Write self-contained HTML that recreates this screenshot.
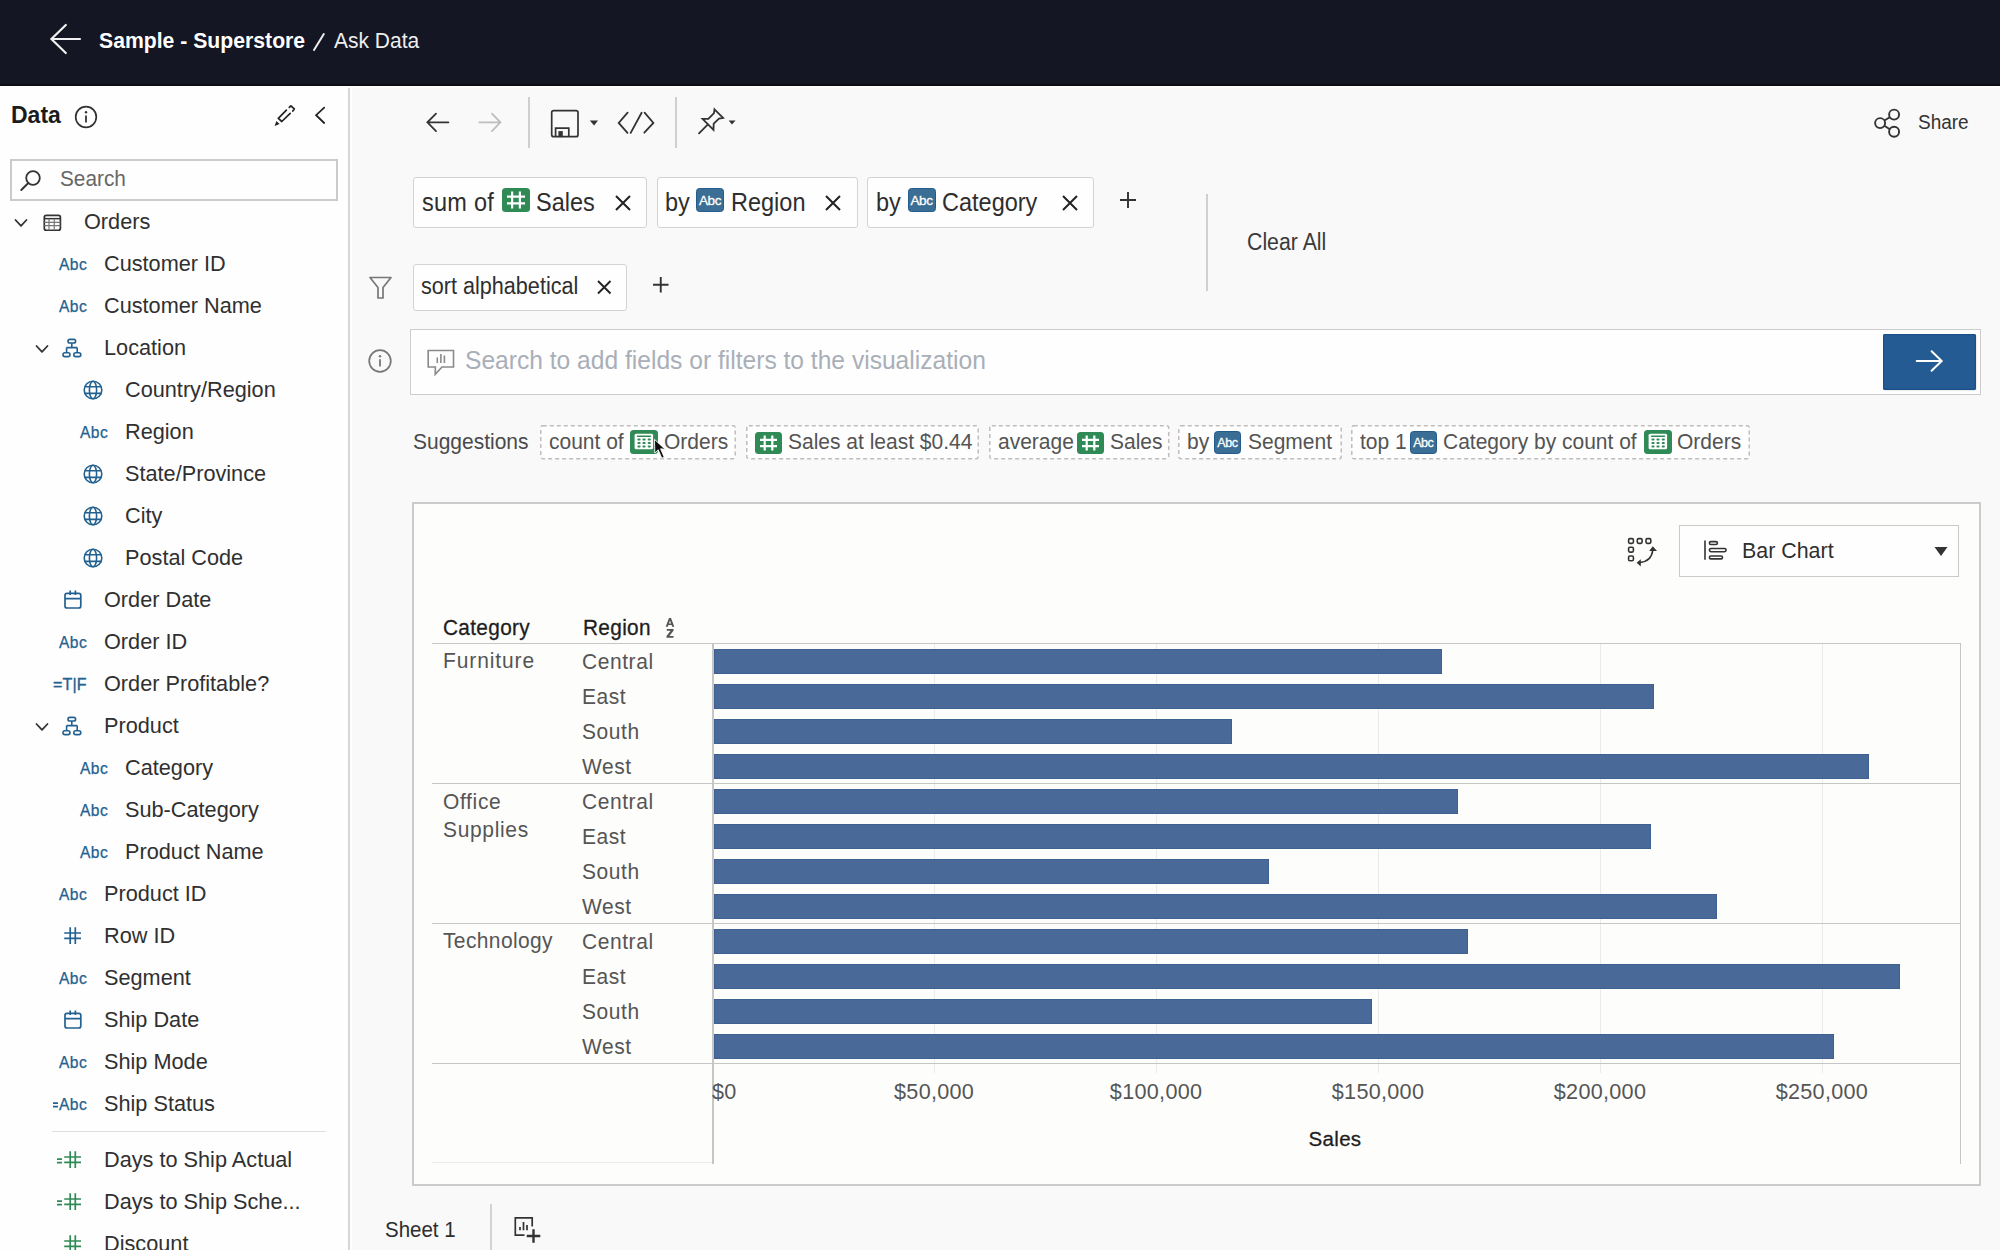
<!DOCTYPE html>
<html><head><meta charset="utf-8"><style>
html,body{margin:0;padding:0;width:2000px;height:1250px;overflow:hidden;background:#f9f9fa;font-family:"Liberation Sans", sans-serif;}
.t{position:absolute;white-space:nowrap;line-height:1;}
svg{overflow:visible}
</style></head><body>
<div style="position:absolute;left:0px;top:0px;width:2000px;height:86px;background:#141624"></div>
<div style="position:absolute;left:0px;top:84px;width:2000px;height:1.6px;background:#0b0d16"></div>
<div style="position:absolute;left:0px;top:86px;width:349px;height:1164px;background:#fefefe"></div>
<div style="position:absolute;left:351px;top:86px;width:1649px;height:1164px;background:#f9f9fa"></div>
<div style="position:absolute;left:348.2px;top:88px;width:1.8px;height:1162px;background:#d6d6d6"></div>
<div style="position:absolute;left:350px;top:86px;width:1.8px;height:1164px;background:#fefefe"></div>
<div style="position:absolute;left:349px;top:86px;width:1651px;height:2px;background:#fefefe"></div>
<svg style="position:absolute;left:49px;top:23px;" width="34" height="33" viewBox="0 0 34 33"><path d="M2.4 16 H31 M16.8 2 L2.4 16 L16.8 30" fill="none" stroke="#f0f0f0" stroke-width="2.2" stroke-linecap="round" stroke-linejoin="miter"/></svg>
<div class="t" style="left:99.0px;top:28.6px;font-size:22.90px;color:#fff;font-weight:bold;transform:scaleX(0.9259);transform-origin:0 0;">Sample - Superstore</div>
<svg style="position:absolute;left:310px;top:31px;" width="18" height="22" viewBox="0 0 18 22"><path d="M4 19 L13.8 3" stroke="#eee" stroke-width="2" stroke-linecap="round"/></svg>
<div class="t" style="left:334.0px;top:28.8px;font-size:22.68px;color:#eee;font-weight:normal;transform:scaleX(0.9259);transform-origin:0 0;">Ask Data</div>
<div class="t" style="left:11.0px;top:103.0px;font-size:24.84px;color:#1b1b1b;font-weight:bold;transform:scaleX(0.9259);transform-origin:0 0;">Data</div>
<svg style="position:absolute;left:74px;top:105px;" width="24" height="24" viewBox="0 0 24 24"><circle cx="12" cy="12" r="10.3" fill="none" stroke="#333" stroke-width="1.7"/><circle cx="12" cy="7.3" r="1.2" fill="#333"/><path d="M12 10.5 V17.5" stroke="#333" stroke-width="1.8"/></svg>
<svg style="position:absolute;left:272px;top:103px;" width="26" height="26" viewBox="0 0 26 26"><g fill="none" stroke="#222" stroke-width="1.7" stroke-linecap="round" stroke-linejoin="round"><path d="M14.4 7.1 L6.3 15.3 L9.8 18.5 L18.2 10.4"/><path d="M17.3 4.4 L18.9 2.8 L22.3 5.9 L20.8 8"/></g><path d="M2.6 22.9 L4.4 17.9 L7.6 21 Z" fill="#222"/></svg>
<svg style="position:absolute;left:313px;top:105px;" width="16" height="20" viewBox="0 0 16 20"><path d="M11.2 2.6 L3.1 10.2 L11.2 18" fill="none" stroke="#222" stroke-width="1.8" stroke-linecap="round" stroke-linejoin="miter"/></svg>
<div style="position:absolute;left:10px;top:159px;width:328px;height:42px;box-sizing:border-box;border:2px solid #cbcbcb;background:#fefefe"></div>
<svg style="position:absolute;left:18px;top:168px;" width="26" height="26" viewBox="0 0 26 26"><circle cx="15" cy="10" r="6.8" fill="none" stroke="#333" stroke-width="1.8"/><path d="M10.3 15 L3.3 22" stroke="#333" stroke-width="1.9" stroke-linecap="round"/></svg>
<div class="t" style="left:59.5px;top:167.6px;font-size:22.46px;color:#666;font-weight:normal;transform:scaleX(0.9259);transform-origin:0 0;">Search</div>
<svg style="position:absolute;left:14.25px;top:218.3px;" width="14" height="10" viewBox="0 0 14 10"><path d="M1.5 2 L7 7.8 L12.5 2" fill="none" stroke="#333" stroke-width="1.8" stroke-linecap="round" stroke-linejoin="round"/></svg>
<svg style="position:absolute;left:42px;top:213px;" width="21" height="19" viewBox="0 0 21 19"><g fill="none"><rect x="2.3" y="2.45" width="16.1" height="14.8" rx="2" stroke="#333" stroke-width="1.7"/><path d="M2.3 5.65 H18.4" stroke="#333" stroke-width="1.5"/><path d="M2.3 9.4 H18.4 M2.3 12.55 H18.4 M7 5.65 V17.2 M12.25 5.65 V17.2" stroke="#777" stroke-width="1.2"/></g></svg>
<div class="t" style="left:84.0px;top:211.0px;font-size:22.46px;color:#303030;font-weight:normal;transform:scaleX(0.9662);transform-origin:0 0;">Orders</div>
<div class="t" style="left:59.0px;top:257.3px;font-size:15.60px;color:#236190;font-weight:normal;letter-spacing:0.45px;-webkit-text-stroke:0.25px #236190">Abc</div>
<div class="t" style="left:104.0px;top:253.0px;font-size:22.46px;color:#303030;font-weight:normal;transform:scaleX(0.9662);transform-origin:0 0;">Customer ID</div>
<div class="t" style="left:59.0px;top:299.3px;font-size:15.60px;color:#236190;font-weight:normal;letter-spacing:0.45px;-webkit-text-stroke:0.25px #236190">Abc</div>
<div class="t" style="left:104.0px;top:295.0px;font-size:22.46px;color:#303030;font-weight:normal;transform:scaleX(0.9662);transform-origin:0 0;">Customer Name</div>
<svg style="position:absolute;left:35.2px;top:344px;" width="14" height="10" viewBox="0 0 14 10"><path d="M1.5 2 L7 7.8 L12.5 2" fill="none" stroke="#333" stroke-width="1.8" stroke-linecap="round" stroke-linejoin="round"/></svg>
<svg style="position:absolute;left:62px;top:338px;" width="20" height="21" viewBox="0 0 20 21"><g fill="none" stroke="#236190" stroke-width="1.6"><rect x="6" y="1.4" width="7.6" height="3.6" rx="1.8"/><path d="M9.8 5 V9.6 M4.6 9.6 H15.2 M4.6 9.6 V14.4 M15.2 9.6 V14.4"/><rect x="1" y="14.8" width="7" height="3.8" rx="1.9"/><rect x="11.8" y="14.8" width="7" height="3.8" rx="1.9"/></g></svg>
<div class="t" style="left:104.0px;top:337.0px;font-size:22.46px;color:#303030;font-weight:normal;transform:scaleX(0.9662);transform-origin:0 0;">Location</div>
<svg style="position:absolute;left:82.9px;top:380.2px;" width="20" height="20" viewBox="0 0 20 20"><g fill="none" stroke="#236190" stroke-width="1.6"><circle cx="10" cy="10" r="8.8"/><ellipse cx="10" cy="10" rx="3.6" ry="8.8"/><path d="M1.6 6.8 H18.4 M1.6 13.4 H18.4"/></g></svg>
<div class="t" style="left:125.0px;top:379.0px;font-size:22.46px;color:#303030;font-weight:normal;transform:scaleX(0.9662);transform-origin:0 0;">Country/Region</div>
<div class="t" style="left:80.0px;top:425.3px;font-size:15.60px;color:#236190;font-weight:normal;letter-spacing:0.45px;-webkit-text-stroke:0.25px #236190">Abc</div>
<div class="t" style="left:125.0px;top:421.0px;font-size:22.46px;color:#303030;font-weight:normal;transform:scaleX(0.9662);transform-origin:0 0;">Region</div>
<svg style="position:absolute;left:82.9px;top:464.2px;" width="20" height="20" viewBox="0 0 20 20"><g fill="none" stroke="#236190" stroke-width="1.6"><circle cx="10" cy="10" r="8.8"/><ellipse cx="10" cy="10" rx="3.6" ry="8.8"/><path d="M1.6 6.8 H18.4 M1.6 13.4 H18.4"/></g></svg>
<div class="t" style="left:125.0px;top:463.0px;font-size:22.46px;color:#303030;font-weight:normal;transform:scaleX(0.9662);transform-origin:0 0;">State/Province</div>
<svg style="position:absolute;left:82.9px;top:506.20000000000005px;" width="20" height="20" viewBox="0 0 20 20"><g fill="none" stroke="#236190" stroke-width="1.6"><circle cx="10" cy="10" r="8.8"/><ellipse cx="10" cy="10" rx="3.6" ry="8.8"/><path d="M1.6 6.8 H18.4 M1.6 13.4 H18.4"/></g></svg>
<div class="t" style="left:125.0px;top:505.0px;font-size:22.46px;color:#303030;font-weight:normal;transform:scaleX(0.9662);transform-origin:0 0;">City</div>
<svg style="position:absolute;left:82.9px;top:548.2px;" width="20" height="20" viewBox="0 0 20 20"><g fill="none" stroke="#236190" stroke-width="1.6"><circle cx="10" cy="10" r="8.8"/><ellipse cx="10" cy="10" rx="3.6" ry="8.8"/><path d="M1.6 6.8 H18.4 M1.6 13.4 H18.4"/></g></svg>
<div class="t" style="left:125.0px;top:547.0px;font-size:22.46px;color:#303030;font-weight:normal;transform:scaleX(0.9662);transform-origin:0 0;">Postal Code</div>
<svg style="position:absolute;left:63px;top:589px;" width="20" height="21" viewBox="0 0 20 21"><g fill="none" stroke="#236190" stroke-width="1.7"><rect x="2" y="4.4" width="15.8" height="14.6" rx="2"/><path d="M2 9.6 H17.8 M7.2 1.4 V6 M12.4 1.4 V6"/></g></svg>
<div class="t" style="left:104.0px;top:589.0px;font-size:22.46px;color:#303030;font-weight:normal;transform:scaleX(0.9662);transform-origin:0 0;">Order Date</div>
<div class="t" style="left:59.0px;top:635.3px;font-size:15.60px;color:#236190;font-weight:normal;letter-spacing:0.45px;-webkit-text-stroke:0.25px #236190">Abc</div>
<div class="t" style="left:104.0px;top:631.0px;font-size:22.46px;color:#303030;font-weight:normal;transform:scaleX(0.9662);transform-origin:0 0;">Order ID</div>
<div class="t" style="left:53.0px;top:677.0px;font-size:16.00px;color:#236190;font-weight:normal;letter-spacing:0.2px;-webkit-text-stroke:0.35px #236190">=T|F</div>
<div class="t" style="left:104.0px;top:673.0px;font-size:22.46px;color:#303030;font-weight:normal;transform:scaleX(0.9662);transform-origin:0 0;">Order Profitable?</div>
<svg style="position:absolute;left:35.2px;top:722px;" width="14" height="10" viewBox="0 0 14 10"><path d="M1.5 2 L7 7.8 L12.5 2" fill="none" stroke="#333" stroke-width="1.8" stroke-linecap="round" stroke-linejoin="round"/></svg>
<svg style="position:absolute;left:62px;top:716px;" width="20" height="21" viewBox="0 0 20 21"><g fill="none" stroke="#236190" stroke-width="1.6"><rect x="6" y="1.4" width="7.6" height="3.6" rx="1.8"/><path d="M9.8 5 V9.6 M4.6 9.6 H15.2 M4.6 9.6 V14.4 M15.2 9.6 V14.4"/><rect x="1" y="14.8" width="7" height="3.8" rx="1.9"/><rect x="11.8" y="14.8" width="7" height="3.8" rx="1.9"/></g></svg>
<div class="t" style="left:104.0px;top:715.0px;font-size:22.46px;color:#303030;font-weight:normal;transform:scaleX(0.9662);transform-origin:0 0;">Product</div>
<div class="t" style="left:80.0px;top:761.3px;font-size:15.60px;color:#236190;font-weight:normal;letter-spacing:0.45px;-webkit-text-stroke:0.25px #236190">Abc</div>
<div class="t" style="left:125.0px;top:757.0px;font-size:22.46px;color:#303030;font-weight:normal;transform:scaleX(0.9662);transform-origin:0 0;">Category</div>
<div class="t" style="left:80.0px;top:803.3px;font-size:15.60px;color:#236190;font-weight:normal;letter-spacing:0.45px;-webkit-text-stroke:0.25px #236190">Abc</div>
<div class="t" style="left:125.0px;top:799.0px;font-size:22.46px;color:#303030;font-weight:normal;transform:scaleX(0.9662);transform-origin:0 0;">Sub-Category</div>
<div class="t" style="left:80.0px;top:845.3px;font-size:15.60px;color:#236190;font-weight:normal;letter-spacing:0.45px;-webkit-text-stroke:0.25px #236190">Abc</div>
<div class="t" style="left:125.0px;top:841.0px;font-size:22.46px;color:#303030;font-weight:normal;transform:scaleX(0.9662);transform-origin:0 0;">Product Name</div>
<div class="t" style="left:59.0px;top:887.3px;font-size:15.60px;color:#236190;font-weight:normal;letter-spacing:0.45px;-webkit-text-stroke:0.25px #236190">Abc</div>
<div class="t" style="left:104.0px;top:883.0px;font-size:22.46px;color:#303030;font-weight:normal;transform:scaleX(0.9662);transform-origin:0 0;">Product ID</div>
<svg style="position:absolute;left:62px;top:926px;" width="22" height="20" viewBox="0 0 22 20"><g fill="none" stroke="#236190" stroke-width="1.7"><path d="M8.2 1.2 V18 M13.3 1.2 V18 M2.2 7 H19 M2.2 12.3 H19"/></g></svg>
<div class="t" style="left:104.0px;top:925.0px;font-size:22.46px;color:#303030;font-weight:normal;transform:scaleX(0.9662);transform-origin:0 0;">Row ID</div>
<div class="t" style="left:59.0px;top:971.3px;font-size:15.60px;color:#236190;font-weight:normal;letter-spacing:0.45px;-webkit-text-stroke:0.25px #236190">Abc</div>
<div class="t" style="left:104.0px;top:967.0px;font-size:22.46px;color:#303030;font-weight:normal;transform:scaleX(0.9662);transform-origin:0 0;">Segment</div>
<svg style="position:absolute;left:63px;top:1009px;" width="20" height="21" viewBox="0 0 20 21"><g fill="none" stroke="#236190" stroke-width="1.7"><rect x="2" y="4.4" width="15.8" height="14.6" rx="2"/><path d="M2 9.6 H17.8 M7.2 1.4 V6 M12.4 1.4 V6"/></g></svg>
<div class="t" style="left:104.0px;top:1009.0px;font-size:22.46px;color:#303030;font-weight:normal;transform:scaleX(0.9662);transform-origin:0 0;">Ship Date</div>
<div class="t" style="left:59.0px;top:1055.3px;font-size:15.60px;color:#236190;font-weight:normal;letter-spacing:0.45px;-webkit-text-stroke:0.25px #236190">Abc</div>
<div class="t" style="left:104.0px;top:1051.0px;font-size:22.46px;color:#303030;font-weight:normal;transform:scaleX(0.9662);transform-origin:0 0;">Ship Mode</div>
<svg style="position:absolute;left:51.5px;top:1100.5px;" width="8" height="8" viewBox="0 0 8 8"><path d="M1 2.1 H6 M1 5.6 H6" stroke="#236190" stroke-width="1.7"/></svg>
<div class="t" style="left:59.0px;top:1097.3px;font-size:15.60px;color:#236190;font-weight:normal;letter-spacing:0.45px;-webkit-text-stroke:0.25px #236190">Abc</div>
<div class="t" style="left:104.0px;top:1093.0px;font-size:22.46px;color:#303030;font-weight:normal;transform:scaleX(0.9662);transform-origin:0 0;">Ship Status</div>
<div style="position:absolute;left:52px;top:1130.6px;width:274px;height:1.4px;background:#e0e0e0"></div>
<svg style="position:absolute;left:56px;top:1156.5px;" width="8" height="8" viewBox="0 0 8 8"><path d="M1 2.1 H6 M1 5.6 H6" stroke="#2f8a56" stroke-width="1.7"/></svg>
<svg style="position:absolute;left:62px;top:1150px;" width="22" height="20" viewBox="0 0 22 20"><g fill="none" stroke="#2f8a56" stroke-width="1.7"><path d="M8.2 1.2 V18 M13.3 1.2 V18 M2.2 7 H19 M2.2 12.3 H19"/></g></svg>
<div class="t" style="left:104.0px;top:1149.0px;font-size:22.46px;color:#303030;font-weight:normal;transform:scaleX(0.9662);transform-origin:0 0;">Days to Ship Actual</div>
<svg style="position:absolute;left:56px;top:1198.5px;" width="8" height="8" viewBox="0 0 8 8"><path d="M1 2.1 H6 M1 5.6 H6" stroke="#2f8a56" stroke-width="1.7"/></svg>
<svg style="position:absolute;left:62px;top:1192px;" width="22" height="20" viewBox="0 0 22 20"><g fill="none" stroke="#2f8a56" stroke-width="1.7"><path d="M8.2 1.2 V18 M13.3 1.2 V18 M2.2 7 H19 M2.2 12.3 H19"/></g></svg>
<div class="t" style="left:104.0px;top:1191.0px;font-size:22.46px;color:#303030;font-weight:normal;transform:scaleX(0.9662);transform-origin:0 0;">Days to Ship Sche...</div>
<svg style="position:absolute;left:62px;top:1234px;" width="22" height="20" viewBox="0 0 22 20"><g fill="none" stroke="#2f8a56" stroke-width="1.7"><path d="M8.2 1.2 V18 M13.3 1.2 V18 M2.2 7 H19 M2.2 12.3 H19"/></g></svg>
<div class="t" style="left:104.0px;top:1233.0px;font-size:22.46px;color:#303030;font-weight:normal;transform:scaleX(0.9662);transform-origin:0 0;">Discount</div>
<svg style="position:absolute;left:424px;top:110px;" width="28" height="25" viewBox="0 0 28 25"><path d="M3.4 12.3 H24.4 M12 3.6 L3.4 12.3 L12 21.1" fill="none" stroke="#333" stroke-width="1.8" stroke-linecap="round" stroke-linejoin="miter"/></svg>
<svg style="position:absolute;left:477px;top:110px;" width="28" height="25" viewBox="0 0 28 25"><path d="M2.4 12.3 H23.4 M15 3.6 L23.4 12.3 L15 21.1" fill="none" stroke="#bdbdbd" stroke-width="1.8" stroke-linecap="round" stroke-linejoin="miter"/></svg>
<div style="position:absolute;left:528px;top:97px;width:2px;height:51px;background:#cfcfcf"></div>
<div style="position:absolute;left:675px;top:97px;width:2px;height:51px;background:#cfcfcf"></div>
<svg style="position:absolute;left:549px;top:108px;" width="32" height="32" viewBox="0 0 32 32"><g fill="none" stroke="#333" stroke-width="1.7"><rect x="2.7" y="2.6" width="26.3" height="26.1" rx="2"/><path d="M6.6 28.7 V20.2 H19.8 V28.7"/></g><rect x="9.4" y="23.1" width="4.4" height="6" fill="#333"/></svg>
<svg style="position:absolute;left:588px;top:118px;" width="12" height="9" viewBox="0 0 12 9"><path d="M1.8 2.4 H10 L6.1 7.6 Z" fill="#333"/></svg>
<svg style="position:absolute;left:616px;top:110px;" width="40" height="26" viewBox="0 0 40 26"><path d="M11.6 2.7 L2.7 12.9 L11.5 22.9 M25.6 2.7 L14.7 22.9 M28.6 2.7 L37.4 12.9 L28.3 22.7" fill="none" stroke="#333" stroke-width="1.8" stroke-linecap="round" stroke-linejoin="miter"/></svg>
<svg style="position:absolute;left:696px;top:106px;" width="30" height="30" viewBox="0 0 30 30"><g fill="none" stroke="#333" stroke-width="1.8" stroke-linejoin="miter"><path d="M18.5 3.3 L27.1 11.9 L23 12.6 L17.7 17.7 L17.5 23.8 L6.6 12.9 L12.4 12.9 L18 7.1 Z"/><path d="M11.4 18.8 L3 27.4" stroke-linecap="round"/></g></svg>
<svg style="position:absolute;left:727px;top:118px;" width="11" height="9" viewBox="0 0 11 9"><path d="M1.7 2.5 H8.6 L4.9 6.6 Z" fill="#333"/></svg>
<svg style="position:absolute;left:1870px;top:106px;" width="36" height="34" viewBox="0 0 36 34"><g fill="none" stroke="#333" stroke-width="1.9"><circle cx="10.1" cy="17.1" r="5"/><circle cx="24.1" cy="8.6" r="5"/><circle cx="24.1" cy="25.8" r="5"/><path d="M14.4 14.5 L19.8 11.2 M14.4 19.7 L19.8 23.2"/></g></svg>
<div class="t" style="left:1917.8px;top:111.8px;font-size:20.52px;color:#333;font-weight:normal;transform:scaleX(0.9259);transform-origin:0 0;">Share</div>
<div style="position:absolute;left:413px;top:177px;width:234px;height:51px;box-sizing:border-box;border:1.5px solid #d3d3d3;border-radius:3px;background:#fefefe"></div>
<div class="t" style="left:421.6px;top:189.5px;font-size:25.38px;color:#2e2e2e;font-weight:normal;transform:scaleX(0.9259);transform-origin:0 0;letter-spacing:0.3px">sum of</div>
<svg style="position:absolute;left:502px;top:188px;" width="28" height="24" viewBox="0 0 28 24"><rect x="0" y="0" width="28" height="24" rx="3.5" fill="#2f8a56"/><path d="M10.1 3.5 V20.5 M17.9 3.5 V20.5 M5 8.6 H23 M5 15.4 H23" stroke="#fff" stroke-width="2.2"/></svg>
<div class="t" style="left:535.8px;top:189.5px;font-size:25.38px;color:#2e2e2e;font-weight:normal;transform:scaleX(0.9259);transform-origin:0 0;">Sales</div>
<svg style="position:absolute;left:613.5px;top:193.7px;" width="18" height="18" viewBox="0 0 18 18"><path d="M2 2 L16 16 M16 2 L2 16" stroke="#222" stroke-width="2" stroke-linecap="butt"/></svg>
<div style="position:absolute;left:656.5px;top:177px;width:201px;height:51px;box-sizing:border-box;border:1.5px solid #d3d3d3;border-radius:3px;background:#fefefe"></div>
<div class="t" style="left:665.0px;top:189.5px;font-size:25.38px;color:#2e2e2e;font-weight:normal;transform:scaleX(0.9259);transform-origin:0 0;">by</div>
<div style="position:absolute;left:696px;top:188px;width:28px;height:24px;box-sizing:border-box;background:#3a6e94;border:1.3px solid #245b8b;border-radius:3.5px;color:#fff;font-size:13.5px;line-height:21.4px;text-align:center;letter-spacing:-0.4px;-webkit-text-stroke:0.3px #fff;padding-top:1px">Abc</div>
<div class="t" style="left:731.0px;top:189.5px;font-size:25.38px;color:#2e2e2e;font-weight:normal;transform:scaleX(0.9259);transform-origin:0 0;">Region</div>
<svg style="position:absolute;left:824.3px;top:193.7px;" width="18" height="18" viewBox="0 0 18 18"><path d="M2 2 L16 16 M16 2 L2 16" stroke="#222" stroke-width="2" stroke-linecap="butt"/></svg>
<div style="position:absolute;left:867px;top:177px;width:227px;height:51px;box-sizing:border-box;border:1.5px solid #d3d3d3;border-radius:3px;background:#fefefe"></div>
<div class="t" style="left:875.6px;top:189.5px;font-size:25.38px;color:#2e2e2e;font-weight:normal;transform:scaleX(0.9259);transform-origin:0 0;">by</div>
<div style="position:absolute;left:907.5px;top:188px;width:28px;height:24px;box-sizing:border-box;background:#3a6e94;border:1.3px solid #245b8b;border-radius:3.5px;color:#fff;font-size:13.5px;line-height:21.4px;text-align:center;letter-spacing:-0.4px;-webkit-text-stroke:0.3px #fff;padding-top:1px">Abc</div>
<div class="t" style="left:941.6px;top:189.5px;font-size:25.38px;color:#2e2e2e;font-weight:normal;transform:scaleX(0.9259);transform-origin:0 0;">Category</div>
<svg style="position:absolute;left:1060.5px;top:193.7px;" width="18" height="18" viewBox="0 0 18 18"><path d="M2 2 L16 16 M16 2 L2 16" stroke="#222" stroke-width="2" stroke-linecap="butt"/></svg>
<svg style="position:absolute;left:1118.0px;top:189.5px;" width="20" height="20" viewBox="0 0 20 20"><path d="M10.0 2 V18 M2 10.0 H18" stroke="#333" stroke-width="1.9"/></svg>
<div style="position:absolute;left:1206px;top:194px;width:1.8px;height:97px;background:#d0d0d0"></div>
<div class="t" style="left:1246.8px;top:230.5px;font-size:23.00px;color:#3a3a3a;font-weight:normal;transform:scaleX(0.9259);transform-origin:0 0;">Clear All</div>
<svg style="position:absolute;left:367px;top:274px;" width="27" height="27" viewBox="0 0 27 27"><path d="M3 3.5 H24 L16 13.5 V24 H11 V13.5 Z" fill="none" stroke="#777" stroke-width="1.7" stroke-linejoin="round"/></svg>
<div style="position:absolute;left:412.5px;top:264px;width:214.5px;height:46.5px;box-sizing:border-box;border:1.5px solid #d3d3d3;border-radius:3px;background:#fefefe"></div>
<div class="t" style="left:421.4px;top:275.3px;font-size:23.33px;color:#2e2e2e;font-weight:normal;transform:scaleX(0.9259);transform-origin:0 0;">sort alphabetical</div>
<svg style="position:absolute;left:596.05px;top:278.75px;" width="16.5" height="16.5" viewBox="0 0 16.5 16.5"><path d="M2 2 L14.5 14.5 M14.5 2 L2 14.5" stroke="#222" stroke-width="1.9" stroke-linecap="butt"/></svg>
<svg style="position:absolute;left:651.25px;top:275.25px;" width="19.5" height="19.5" viewBox="0 0 19.5 19.5"><path d="M9.75 2 V17.5 M2 9.75 H17.5" stroke="#333" stroke-width="1.9"/></svg>
<svg style="position:absolute;left:367px;top:348px;" width="26" height="26" viewBox="0 0 26 26"><circle cx="13" cy="13" r="10.8" fill="none" stroke="#777" stroke-width="1.7"/><circle cx="13" cy="8.2" r="1.2" fill="#777"/><path d="M13 11.2 V18.6" stroke="#777" stroke-width="1.8"/></svg>
<div style="position:absolute;left:410px;top:329px;width:1571px;height:66px;box-sizing:border-box;border:1.8px solid #cdcdcd;background:#fefefe"></div>
<svg style="position:absolute;left:425px;top:348px;" width="32" height="30" viewBox="0 0 32 30"><g fill="none" stroke="#8a8a8a" stroke-width="1.6" stroke-linejoin="miter"><path d="M10.4 18.95 H3.2 V2.45 H28.5 V18.95 H17 L10.2 26.4 Z"/><path d="M12.3 9.6 V15.1 M15.9 5.9 V15.1 M19.4 7.4 V15.1"/></g></svg>
<div class="t" style="left:465.4px;top:346.5px;font-size:26.57px;color:#a9afb8;font-weight:normal;transform:scaleX(0.9259);transform-origin:0 0;">Search to add fields or filters to the visualization</div>
<div style="position:absolute;left:1883px;top:334px;width:93px;height:55.5px;background:#235b92;border-radius:2px;box-shadow:inset 0 0 0 1.2px #1a4f88, 1px 1px 1px rgba(0,0,0,0.08)"></div>
<svg style="position:absolute;left:1912px;top:347px;" width="34" height="28" viewBox="0 0 34 28"><path d="M4.7 14 H29.7 M19.6 4.2 L29.7 14 L19.6 23.8" fill="none" stroke="#fff" stroke-width="2" stroke-linecap="round" stroke-linejoin="miter"/></svg>
<div class="t" style="left:413.3px;top:430.0px;font-size:22.68px;color:#4a4a4a;font-weight:normal;transform:scaleX(0.9259);transform-origin:0 0;">Suggestions</div>
<svg style="position:absolute;left:540px;top:425px;" width="196" height="34.5" viewBox="0 0 196 34.5"><rect x="0.8" y="0.8" width="194.4" height="32.9" rx="2" fill="#fefefe" stroke="#c2bcbc" stroke-width="1.5" stroke-dasharray="4 3"/></svg>
<div class="t" style="left:549.3px;top:430.0px;font-size:22.68px;color:#545454;font-weight:normal;transform:scaleX(0.9259);transform-origin:0 0;">count of</div>
<svg style="position:absolute;left:630.4px;top:430.2px;" width="28" height="24" viewBox="0 0 28 24"><rect x="0" y="0" width="28" height="24" rx="3.5" fill="#2f8a56"/><rect x="4.6" y="3.8" width="18.5" height="15.5" rx="1.5" fill="#fff"/><path d="M7.6 6.2 H20.4" stroke="#2f8a56" stroke-width="1.6" stroke-linecap="round"/><rect x="7.4" y="8.6" width="3.2" height="2" rx="1" fill="#2f8a56"/><rect x="7.4" y="12.1" width="3.2" height="2" rx="1" fill="#2f8a56"/><rect x="7.4" y="15.6" width="3.2" height="2" rx="1" fill="#2f8a56"/><rect x="12.4" y="8.6" width="3.2" height="2" rx="1" fill="#2f8a56"/><rect x="12.4" y="12.1" width="3.2" height="2" rx="1" fill="#2f8a56"/><rect x="12.4" y="15.6" width="3.2" height="2" rx="1" fill="#2f8a56"/><rect x="17.7" y="8.6" width="3.2" height="2" rx="1" fill="#2f8a56"/><rect x="17.7" y="12.1" width="3.2" height="2" rx="1" fill="#2f8a56"/><rect x="17.7" y="15.6" width="3.2" height="2" rx="1" fill="#2f8a56"/></svg>
<div class="t" style="left:664.4px;top:430.0px;font-size:22.68px;color:#545454;font-weight:normal;transform:scaleX(0.9259);transform-origin:0 0;">Orders</div>
<svg style="position:absolute;left:746.3px;top:425px;" width="233" height="34.5" viewBox="0 0 233 34.5"><rect x="0.8" y="0.8" width="231.4" height="32.9" rx="2" fill="#fefefe" stroke="#c2bcbc" stroke-width="1.5" stroke-dasharray="4 3"/></svg>
<svg style="position:absolute;left:754.6px;top:431.5px;" width="27" height="22" viewBox="0 0 27 22"><rect x="0" y="0" width="27" height="22" rx="3.5" fill="#2f8a56"/><path d="M9.7 3.5 V18.5 M17.3 3.5 V18.5 M5 7.9 H22 M5 14.1 H22" stroke="#fff" stroke-width="2.2"/></svg>
<div class="t" style="left:788.2px;top:430.0px;font-size:22.68px;color:#545454;font-weight:normal;transform:scaleX(0.9259);transform-origin:0 0;">Sales at least $0.44</div>
<svg style="position:absolute;left:988.6px;top:425px;" width="180.5" height="34.5" viewBox="0 0 180.5 34.5"><rect x="0.8" y="0.8" width="178.9" height="32.9" rx="2" fill="#fefefe" stroke="#c2bcbc" stroke-width="1.5" stroke-dasharray="4 3"/></svg>
<div class="t" style="left:997.5px;top:430.0px;font-size:22.68px;color:#545454;font-weight:normal;transform:scaleX(0.9259);transform-origin:0 0;">average</div>
<svg style="position:absolute;left:1076.7px;top:431.5px;" width="27" height="22" viewBox="0 0 27 22"><rect x="0" y="0" width="27" height="22" rx="3.5" fill="#2f8a56"/><path d="M9.7 3.5 V18.5 M17.3 3.5 V18.5 M5 7.9 H22 M5 14.1 H22" stroke="#fff" stroke-width="2.2"/></svg>
<div class="t" style="left:1110.0px;top:430.0px;font-size:22.68px;color:#545454;font-weight:normal;transform:scaleX(0.9259);transform-origin:0 0;">Sales</div>
<svg style="position:absolute;left:1178px;top:425px;" width="164" height="34.5" viewBox="0 0 164 34.5"><rect x="0.8" y="0.8" width="162.4" height="32.9" rx="2" fill="#fefefe" stroke="#c2bcbc" stroke-width="1.5" stroke-dasharray="4 3"/></svg>
<div class="t" style="left:1186.7px;top:430.0px;font-size:22.68px;color:#545454;font-weight:normal;transform:scaleX(0.9259);transform-origin:0 0;">by</div>
<div style="position:absolute;left:1214px;top:430.5px;width:27px;height:23px;box-sizing:border-box;background:#3a6e94;border:1.3px solid #245b8b;border-radius:3.5px;color:#fff;font-size:12.5px;line-height:20.4px;text-align:center;letter-spacing:-0.4px;-webkit-text-stroke:0.3px #fff;padding-top:1px">Abc</div>
<div class="t" style="left:1248.3px;top:430.0px;font-size:22.68px;color:#545454;font-weight:normal;transform:scaleX(0.9259);transform-origin:0 0;">Segment</div>
<svg style="position:absolute;left:1350.5px;top:425px;" width="399" height="34.5" viewBox="0 0 399 34.5"><rect x="0.8" y="0.8" width="397.4" height="32.9" rx="2" fill="#fefefe" stroke="#c2bcbc" stroke-width="1.5" stroke-dasharray="4 3"/></svg>
<div class="t" style="left:1360.3px;top:430.0px;font-size:22.68px;color:#545454;font-weight:normal;transform:scaleX(0.9259);transform-origin:0 0;">top 1</div>
<div style="position:absolute;left:1409.8px;top:430.5px;width:27px;height:23px;box-sizing:border-box;background:#3a6e94;border:1.3px solid #245b8b;border-radius:3.5px;color:#fff;font-size:12.5px;line-height:20.4px;text-align:center;letter-spacing:-0.4px;-webkit-text-stroke:0.3px #fff;padding-top:1px">Abc</div>
<div class="t" style="left:1443.3px;top:430.0px;font-size:22.68px;color:#545454;font-weight:normal;transform:scaleX(0.9259);transform-origin:0 0;">Category by count of</div>
<svg style="position:absolute;left:1643.5px;top:430.2px;" width="28" height="24" viewBox="0 0 28 24"><rect x="0" y="0" width="28" height="24" rx="3.5" fill="#2f8a56"/><rect x="4.6" y="3.8" width="18.5" height="15.5" rx="1.5" fill="#fff"/><path d="M7.6 6.2 H20.4" stroke="#2f8a56" stroke-width="1.6" stroke-linecap="round"/><rect x="7.4" y="8.6" width="3.2" height="2" rx="1" fill="#2f8a56"/><rect x="7.4" y="12.1" width="3.2" height="2" rx="1" fill="#2f8a56"/><rect x="7.4" y="15.6" width="3.2" height="2" rx="1" fill="#2f8a56"/><rect x="12.4" y="8.6" width="3.2" height="2" rx="1" fill="#2f8a56"/><rect x="12.4" y="12.1" width="3.2" height="2" rx="1" fill="#2f8a56"/><rect x="12.4" y="15.6" width="3.2" height="2" rx="1" fill="#2f8a56"/><rect x="17.7" y="8.6" width="3.2" height="2" rx="1" fill="#2f8a56"/><rect x="17.7" y="12.1" width="3.2" height="2" rx="1" fill="#2f8a56"/><rect x="17.7" y="15.6" width="3.2" height="2" rx="1" fill="#2f8a56"/></svg>
<div class="t" style="left:1677.3px;top:430.0px;font-size:22.68px;color:#545454;font-weight:normal;transform:scaleX(0.9259);transform-origin:0 0;">Orders</div>
<svg style="position:absolute;left:650px;top:432px;" width="22" height="32" viewBox="0 0 22 32"><path d="M4.5 7.4 L4.8 21 L8.2 17.8 L11.8 26.3 L14.2 25.2 L10.6 16.8 L15.3 17.4 Z" fill="#0d0d0d" stroke="#fff" stroke-width="0.9" stroke-linejoin="round"/></svg>
<div style="position:absolute;left:412px;top:502px;width:1569px;height:684px;box-sizing:border-box;border:2px solid #cbcbcb;background:#fdfdfc"></div>
<svg style="position:absolute;left:1624px;top:534px;" width="36" height="36" viewBox="0 0 36 36"><g fill="none" stroke="#333" stroke-width="1.6"><rect x="4.6" y="4.6" width="4.8" height="4.8" rx="1.3"/><rect x="13.3" y="4.6" width="4.8" height="4.8" rx="1.3"/><rect x="22" y="4.6" width="4.8" height="4.8" rx="1.3"/><rect x="4.6" y="13.3" width="4.8" height="4.8" rx="1.3"/><rect x="4.6" y="22" width="4.8" height="4.8" rx="1.3"/><path d="M15.5 28.6 Q27.5 27.5 28.8 16"/></g><path d="M28.8 12.2 L33 17 L25.2 17 Z M12.6 28.7 L16.8 25.2 L16.8 32.6 Z" fill="#333"/></svg>
<div style="position:absolute;left:1678.5px;top:525px;width:280px;height:52px;box-sizing:border-box;border:1.8px solid #cacaca;background:#fefefe"></div>
<svg style="position:absolute;left:1702px;top:538px;" width="28" height="25" viewBox="0 0 28 25"><g fill="none" stroke="#333" stroke-width="1.6"><path d="M3 2.5 V21.7"/><rect x="7.4" y="3.6" width="8" height="2.9" rx="1.45"/><rect x="7.4" y="10.5" width="16.7" height="3.2" rx="1.6"/><rect x="7.4" y="18" width="13.1" height="2.9" rx="1.45"/></g></svg>
<div class="t" style="left:1742.0px;top:539.8px;font-size:22.47px;color:#2e2e2e;font-weight:normal;transform:scaleX(0.9524);transform-origin:0 0;">Bar Chart</div>
<svg style="position:absolute;left:1933px;top:545px;" width="16" height="13" viewBox="0 0 16 13"><path d="M1.5 2 H14.5 L8 11 Z" fill="#333"/></svg>
<div class="t" style="left:442.5px;top:617.3px;font-size:22.05px;color:#1e1e1e;font-weight:normal;transform:scaleX(0.9434);transform-origin:0 0;letter-spacing:0.35px;-webkit-text-stroke:0.3px #1e1e1e">Category</div>
<div class="t" style="left:582.5px;top:617.3px;font-size:22.05px;color:#1e1e1e;font-weight:normal;transform:scaleX(0.9434);transform-origin:0 0;letter-spacing:0.35px;-webkit-text-stroke:0.3px #1e1e1e">Region</div>
<svg style="position:absolute;left:664px;top:616px;" width="12" height="24" viewBox="0 0 12 24"><path fill-rule="evenodd" d="M5 2 H7 L10.3 10.8 H8.2 L7.6 9.1 H4.4 L3.8 10.8 H1.7 Z M5 7.4 H7 L6 4.6 Z" fill="#555"/><path d="M2.8 13 H9.5 V14.8 L5.4 20 H9.5 V21.7 H2.5 V19.9 L6.6 14.7 H2.8 Z" fill="#555"/></svg>
<div style="position:absolute;left:934.0px;top:643.5px;width:1.2px;height:429px;background:#ebebeb"></div>
<div style="position:absolute;left:1156.0px;top:643.5px;width:1.2px;height:429px;background:#ebebeb"></div>
<div style="position:absolute;left:1378.0px;top:643.5px;width:1.2px;height:429px;background:#ebebeb"></div>
<div style="position:absolute;left:1600.0px;top:643.5px;width:1.2px;height:429px;background:#ebebeb"></div>
<div style="position:absolute;left:1822.0px;top:643.5px;width:1.2px;height:429px;background:#ebebeb"></div>
<div style="position:absolute;left:432px;top:642.7px;width:1529px;height:1.6px;background:#c6c6c6"></div>
<div style="position:absolute;left:432px;top:782.7px;width:1529px;height:1.6px;background:#c6c6c6"></div>
<div style="position:absolute;left:432px;top:922.7px;width:1529px;height:1.6px;background:#c6c6c6"></div>
<div style="position:absolute;left:432px;top:1062.7px;width:1529px;height:1.6px;background:#c6c6c6"></div>
<div style="position:absolute;left:432px;top:1162px;width:281px;height:1.2px;background:#ececec"></div>
<div style="position:absolute;left:712.2px;top:643.5px;width:1.6px;height:520px;background:#c6c6c6"></div>
<div style="position:absolute;left:1959.8px;top:643.5px;width:1.6px;height:520px;background:#c6c6c6"></div>
<div style="position:absolute;left:714px;top:648.75px;width:727.5px;height:25.25px;background:#496a99;box-shadow:inset 0 0 0 0.8px #3c5f8f"></div>
<div style="position:absolute;left:714px;top:683.75px;width:940.0px;height:25.25px;background:#496a99;box-shadow:inset 0 0 0 0.8px #3c5f8f"></div>
<div style="position:absolute;left:714px;top:718.75px;width:517.5px;height:25.25px;background:#496a99;box-shadow:inset 0 0 0 0.8px #3c5f8f"></div>
<div style="position:absolute;left:714px;top:753.75px;width:1154.5px;height:25.25px;background:#496a99;box-shadow:inset 0 0 0 0.8px #3c5f8f"></div>
<div style="position:absolute;left:714px;top:788.75px;width:744.0px;height:25.25px;background:#496a99;box-shadow:inset 0 0 0 0.8px #3c5f8f"></div>
<div style="position:absolute;left:714px;top:823.75px;width:936.5px;height:25.25px;background:#496a99;box-shadow:inset 0 0 0 0.8px #3c5f8f"></div>
<div style="position:absolute;left:714px;top:858.75px;width:554.5px;height:25.25px;background:#496a99;box-shadow:inset 0 0 0 0.8px #3c5f8f"></div>
<div style="position:absolute;left:714px;top:893.75px;width:1002.5px;height:25.25px;background:#496a99;box-shadow:inset 0 0 0 0.8px #3c5f8f"></div>
<div style="position:absolute;left:714px;top:928.75px;width:754.0px;height:25.25px;background:#496a99;box-shadow:inset 0 0 0 0.8px #3c5f8f"></div>
<div style="position:absolute;left:714px;top:963.75px;width:1186.0px;height:25.25px;background:#496a99;box-shadow:inset 0 0 0 0.8px #3c5f8f"></div>
<div style="position:absolute;left:714px;top:998.75px;width:657.5px;height:25.25px;background:#496a99;box-shadow:inset 0 0 0 0.8px #3c5f8f"></div>
<div style="position:absolute;left:714px;top:1033.75px;width:1119.5px;height:25.25px;background:#496a99;box-shadow:inset 0 0 0 0.8px #3c5f8f"></div>
<div class="t" style="left:582.0px;top:651.2px;font-size:22.26px;color:#555;font-weight:normal;transform:scaleX(0.9434);transform-origin:0 0;letter-spacing:0.6px">Central</div>
<div class="t" style="left:582.0px;top:686.2px;font-size:22.26px;color:#555;font-weight:normal;transform:scaleX(0.9434);transform-origin:0 0;letter-spacing:0.6px">East</div>
<div class="t" style="left:582.0px;top:721.2px;font-size:22.26px;color:#555;font-weight:normal;transform:scaleX(0.9434);transform-origin:0 0;letter-spacing:0.6px">South</div>
<div class="t" style="left:582.0px;top:756.2px;font-size:22.26px;color:#555;font-weight:normal;transform:scaleX(0.9434);transform-origin:0 0;letter-spacing:0.6px">West</div>
<div class="t" style="left:582.0px;top:791.2px;font-size:22.26px;color:#555;font-weight:normal;transform:scaleX(0.9434);transform-origin:0 0;letter-spacing:0.6px">Central</div>
<div class="t" style="left:582.0px;top:826.2px;font-size:22.26px;color:#555;font-weight:normal;transform:scaleX(0.9434);transform-origin:0 0;letter-spacing:0.6px">East</div>
<div class="t" style="left:582.0px;top:861.2px;font-size:22.26px;color:#555;font-weight:normal;transform:scaleX(0.9434);transform-origin:0 0;letter-spacing:0.6px">South</div>
<div class="t" style="left:582.0px;top:896.2px;font-size:22.26px;color:#555;font-weight:normal;transform:scaleX(0.9434);transform-origin:0 0;letter-spacing:0.6px">West</div>
<div class="t" style="left:582.0px;top:931.2px;font-size:22.26px;color:#555;font-weight:normal;transform:scaleX(0.9434);transform-origin:0 0;letter-spacing:0.6px">Central</div>
<div class="t" style="left:582.0px;top:966.2px;font-size:22.26px;color:#555;font-weight:normal;transform:scaleX(0.9434);transform-origin:0 0;letter-spacing:0.6px">East</div>
<div class="t" style="left:582.0px;top:1001.2px;font-size:22.26px;color:#555;font-weight:normal;transform:scaleX(0.9434);transform-origin:0 0;letter-spacing:0.6px">South</div>
<div class="t" style="left:582.0px;top:1036.2px;font-size:22.26px;color:#555;font-weight:normal;transform:scaleX(0.9434);transform-origin:0 0;letter-spacing:0.6px">West</div>
<div class="t" style="left:443.0px;top:650.2px;font-size:22.26px;color:#555;font-weight:normal;transform:scaleX(0.9434);transform-origin:0 0;letter-spacing:0.95px">Furniture</div>
<div class="t" style="left:443.0px;top:790.6px;font-size:22.26px;color:#555;font-weight:normal;transform:scaleX(0.9434);transform-origin:0 0;letter-spacing:0.7px">Office</div>
<div class="t" style="left:443.0px;top:819.0px;font-size:22.26px;color:#555;font-weight:normal;transform:scaleX(0.9434);transform-origin:0 0;letter-spacing:0.7px">Supplies</div>
<div class="t" style="left:443.0px;top:930.2px;font-size:22.26px;color:#555;font-weight:normal;transform:scaleX(0.9434);transform-origin:0 0;letter-spacing:0.4px">Technology</div>
<div class="t" style="left:711.5px;top:1079.6px;font-size:22.90px;color:#555;font-weight:normal;transform:scaleX(0.9434);transform-origin:0 0;letter-spacing:0.3px">$0</div>
<div class="t" style="left:734.1px;width:400px;text-align:center;top:1080.7px;font-size:21.60px;color:#555;font-weight:normal;letter-spacing:0.3px">$50,000</div>
<div class="t" style="left:956.1px;width:400px;text-align:center;top:1080.7px;font-size:21.60px;color:#555;font-weight:normal;letter-spacing:0.3px">$100,000</div>
<div class="t" style="left:1178.0px;width:400px;text-align:center;top:1080.7px;font-size:21.60px;color:#555;font-weight:normal;letter-spacing:0.3px">$150,000</div>
<div class="t" style="left:1400.0px;width:400px;text-align:center;top:1080.7px;font-size:21.60px;color:#555;font-weight:normal;letter-spacing:0.3px">$200,000</div>
<div class="t" style="left:1621.9px;width:400px;text-align:center;top:1080.7px;font-size:21.60px;color:#555;font-weight:normal;letter-spacing:0.3px">$250,000</div>
<div class="t" style="left:1135.0px;width:400px;text-align:center;top:1129.2px;font-size:20.50px;color:#1e1e1e;font-weight:normal;letter-spacing:0.3px;-webkit-text-stroke:0.3px #1e1e1e">Sales</div>
<div class="t" style="left:384.5px;top:1219.3px;font-size:22.14px;color:#2e2e2e;font-weight:normal;transform:scaleX(0.9259);transform-origin:0 0;">Sheet 1</div>
<div style="position:absolute;left:490px;top:1203.5px;width:1.6px;height:46.5px;background:#d3d3d3"></div>
<svg style="position:absolute;left:512px;top:1215px;" width="30" height="30" viewBox="0 0 30 30"><g fill="none" stroke="#333" stroke-width="1.7"><path d="M12.5 20.2 H3.3 V2.8 H20.2 V11.5"/><path d="M8 12 V15.2 M11.5 7 V15.2 M15 10 V15.2"/></g><path d="M21.5 14.2 V27.8 M14.7 21 H28.3" stroke="#333" stroke-width="2.4"/></svg>
</body></html>
